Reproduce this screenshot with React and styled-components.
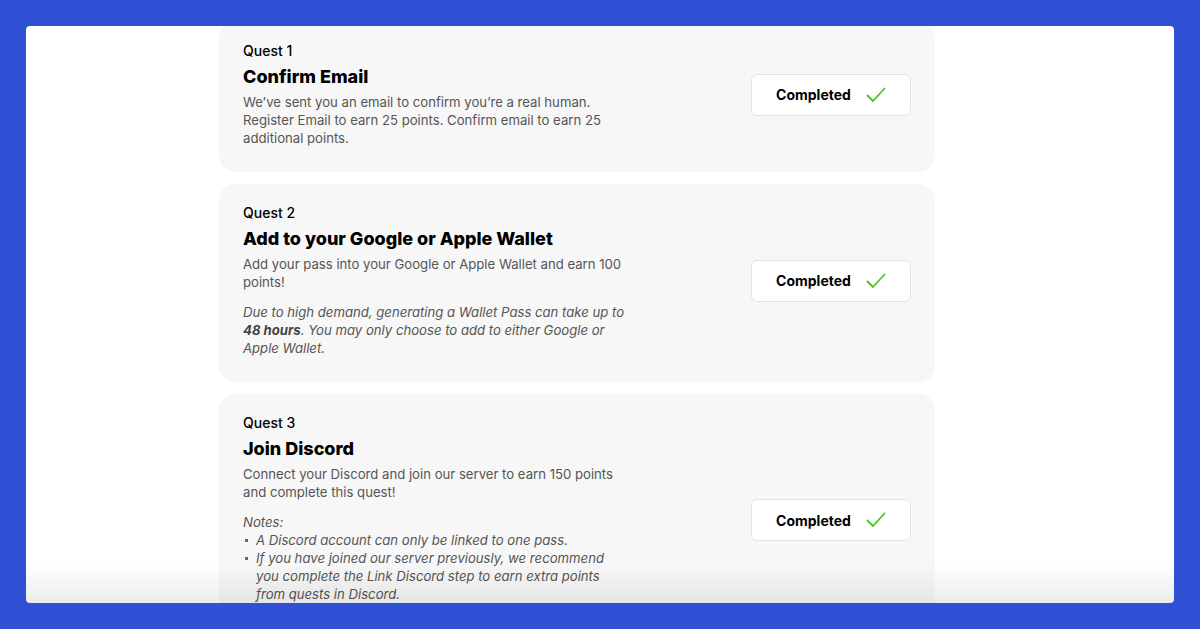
import React from "react";
import styled, { createGlobalStyle } from "styled-components";

const Global = createGlobalStyle`
  html, body {
    margin: 0;
    padding: 0;
    background: #3051d6;
    font-family: Inter, "Noto Sans", sans-serif;
  }
`;

const Page = styled.div`
  width: 1200px;
  height: 629px;
  padding: 26px;
  box-sizing: border-box;
  background: #3051d6;
`;

const Panel = styled.div`
  position: relative;
  height: 577px;
  padding-left: 193px;
  background: #ffffff;
  border-radius: 4px;
  overflow: hidden;

  &::after {
    content: "";
    position: absolute;
    left: 0;
    right: 0;
    bottom: 0;
    height: 40px;
    background: linear-gradient(to bottom, rgba(0, 0, 0, 0), rgba(0, 0, 0, 0.07));
    pointer-events: none;
  }
`;

const List = styled.div`
  width: 716px;
  margin-top: -4px;
  display: flex;
  flex-direction: column;
  gap: 12px;
`;

const Card = styled.div`
  display: flex;
  align-items: center;
  justify-content: space-between;
  padding: 20px 24px 25px;
  background: #f7f7f7;
  border-radius: 16px;
`;

const Info = styled.div`
  width: 384px;
  min-height: ${(p) => p.$minHeight || 0}px;
  display: flex;
  flex-direction: column;
`;

const Label = styled.div`
  font-size: 14px;
  font-weight: 500;
  line-height: 18px;
  color: #000;
`;

const Title = styled.div`
  margin-top: 5px;
  font-size: 18px;
  font-weight: 800;
  line-height: 24px;
  color: #000;
`;

const Body = styled.p`
  margin: 4px 0 0;
  font-size: 13.15px;
  line-height: 18px;
  color: #555;
  font-style: ${(p) => (p.italic ? "italic" : "normal")};
  & + & {
    margin-top: 12px;
  }
  b {
    color: #444;
  }
`;

const Notes = styled.div`
  margin-top: 12px;
  font-size: 13.15px;
  line-height: 18px;
  color: #555;
  font-style: italic;
`;

const Bullets = styled.ul`
  margin: 0;
  padding: 0 10px 0 0;
  list-style: none;
`;

const Bullet = styled.li`
  position: relative;
  padding-left: 13px;
  &::before {
    content: "";
    position: absolute;
    left: 2px;
    top: 8px;
    width: 3px;
    height: 3px;
    background: #666;
  }
`;

const Status = styled.div`
  width: 160px;
  height: 42px;
  box-sizing: border-box;
  display: flex;
  align-items: center;
  justify-content: center;
  gap: 15px;
  background: #fff;
  border: 1px solid #e4e4e4;
  border-radius: 6px;
  font-size: 14px;
  font-weight: 700;
  color: #000;
`;

const Check = () => (
  <svg width="20" height="16" viewBox="0 0 20 16" fill="none">
    <path d="M1.5 8.5 L7 14 L18.5 1.5" stroke="#47c71c" strokeWidth="1.8" strokeLinecap="round" strokeLinejoin="round" />
  </svg>
);

const Completed = () => (
  <Status>
    Completed
    <Check />
  </Status>
);

export default function App() {
  return (
    <Page>
      <Global />
      <Panel>
        <List>
          <Card>
            <Info>
              <Label>Quest 1</Label>
              <Title>Confirm Email</Title>
              <Body>
                We’ve sent you an email to confirm you’re a real human. Register Email to earn 25 points. Confirm email to earn 25 additional points.
              </Body>
            </Info>
            <Completed />
          </Card>
          <Card>
            <Info>
              <Label>Quest 2</Label>
              <Title>Add to your Google or Apple Wallet</Title>
              <Body>Add your pass into your Google or Apple Wallet and earn 100 points!</Body>
              <Body italic>
                Due to high demand, generating a Wallet Pass can take up to <b>48 hours</b>. You may only choose to add to either Google or Apple Wallet.
              </Body>
            </Info>
            <Completed />
          </Card>
          <Card>
            <Info $minHeight={212}>
              <Label>Quest 3</Label>
              <Title>Join Discord</Title>
              <Body>Connect your Discord and join our server to earn 150 points and complete this quest!</Body>
              <Notes>
                Notes:
                <Bullets>
                  <Bullet>A Discord account can only be linked to one pass.</Bullet>
                  <Bullet>
                    If you have joined our server previously, we recommend you complete the Link Discord step to earn extra points from quests in Discord.
                  </Bullet>
                </Bullets>
              </Notes>
            </Info>
            <Completed />
          </Card>
        </List>
      </Panel>
    </Page>
  );
}
